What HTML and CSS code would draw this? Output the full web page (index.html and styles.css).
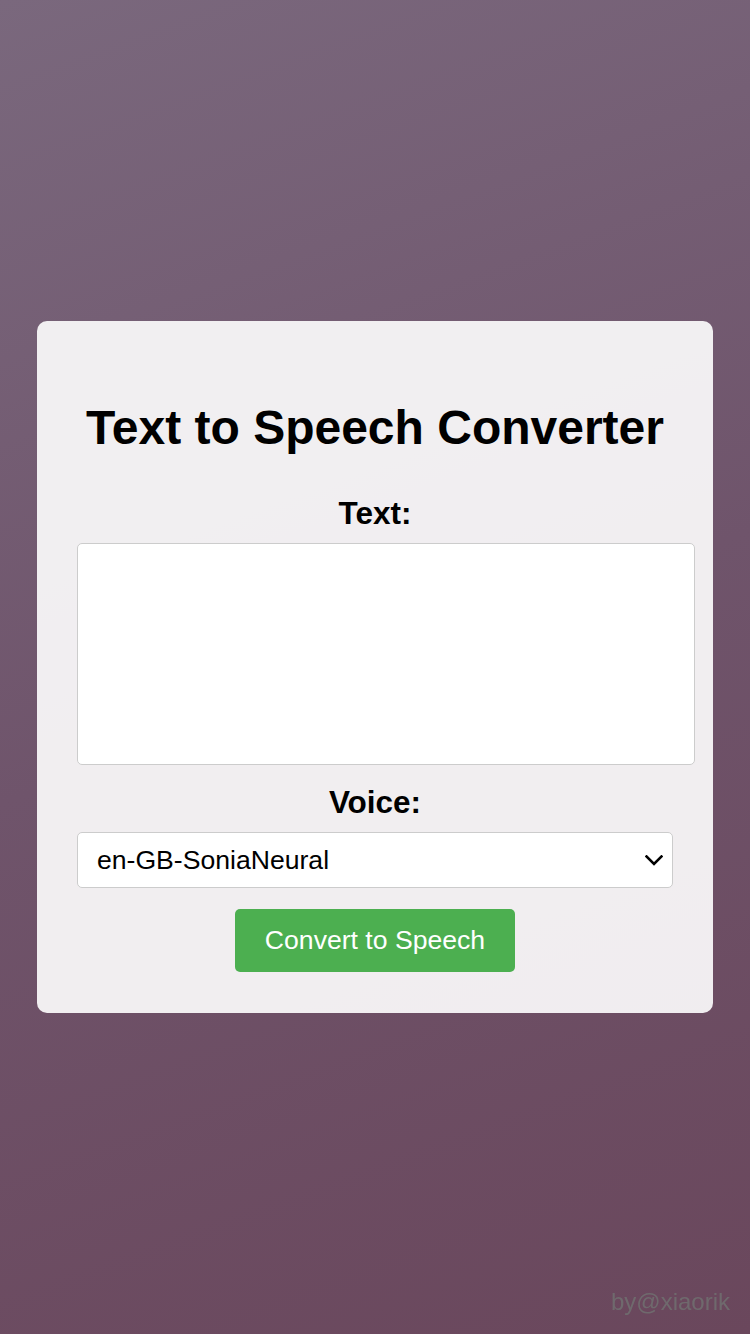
FILE: index.html
```html
<!DOCTYPE html>
<html lang="en">
<head>
<meta charset="utf-8">
<title>Text to Speech Converter</title>
<link rel="stylesheet" href="styles.css">
</head>
<body>
<div class="container">
  <h1 class="title">Text to Speech Converter</h1>
  <label class="label label-text" for="text">Text:</label>
  <textarea id="text" class="textarea"></textarea>
  <label class="label label-voice" for="voice">Voice:</label>
  <div class="select-wrap">
    <select id="voice" class="select">
      <option>en-GB-SoniaNeural</option>
    </select>
    <svg class="chevron" width="18" height="11" viewBox="0 0 18 11" aria-hidden="true">
      <path d="M1.5 1.5 L9 9 L16.5 1.5" fill="none" stroke="#000" stroke-width="2.6" stroke-linecap="square"/>
    </svg>
  </div>
  <button class="button" type="button">Convert to Speech</button>
</div>
<div class="credit">by@xiaorik</div>
</body>
</html>
```

FILE: styles.css
```css
html, body {
  margin: 0;
  padding: 0;
}
body {
  min-height: 100vh;
  display: flex;
  align-items: center;
  justify-content: center;
  background: linear-gradient(160deg, #7a687d 0%, #6f546b 50%, #6a475c 100%);
  font-family: "Liberation Sans", Arial, sans-serif;
}
.container {
  width: 596px;
  padding: 40px 40px 41px;
  background: rgba(255, 255, 255, 0.9);
  border-radius: 10px;
  display: flex;
  flex-direction: column;
  align-items: center;
  box-sizing: content-box;
}
.title {
  font-size: 48px;
  font-weight: bold;
  margin: 39px 0 40px;
  color: #000;
}
.label {
  display: block;
  font-size: 31.5px;
  line-height: 36px;
  font-weight: bold;
  color: #000;
}
.label-text {
  margin-bottom: 12px;
}
.label-voice {
  margin-top: 19px;
  margin-bottom: 12px;
}
.textarea {
  width: 596px;
  height: 200px;
  padding: 10px;
  border: 1px solid #ccc;
  border-radius: 5px;
  background: #fff;
  font-size: 24px;
  font-family: "Liberation Sans", Arial, sans-serif;
  align-self: flex-start;
  box-sizing: content-box;
  resize: none;
  outline: none;
}
.select-wrap {
  position: relative;
  width: 596px;
}
.select {
  display: block;
  width: 596px;
  height: 56px;
  padding: 0 40px 0 19px;
  border: 1px solid #ccc;
  border-radius: 5px;
  background: #fff;
  font-size: 26.6px;
  font-family: "Liberation Sans", Arial, sans-serif;
  color: #000;
  box-sizing: border-box;
  appearance: none;
  -webkit-appearance: none;
}
.chevron {
  position: absolute;
  right: 10px;
  top: 23px;
  pointer-events: none;
}
.button {
  margin-top: 21px;
  width: 280px;
  height: 63px;
  border: none;
  border-radius: 5px;
  background: #4caf50;
  color: #fff;
  font-size: 26.6px;
  font-family: "Liberation Sans", Arial, sans-serif;
  cursor: pointer;
}
.credit {
  position: fixed;
  right: 20px;
  bottom: 18px;
  font-size: 24px;
  color: rgba(112, 112, 112, 0.85);
}
```
